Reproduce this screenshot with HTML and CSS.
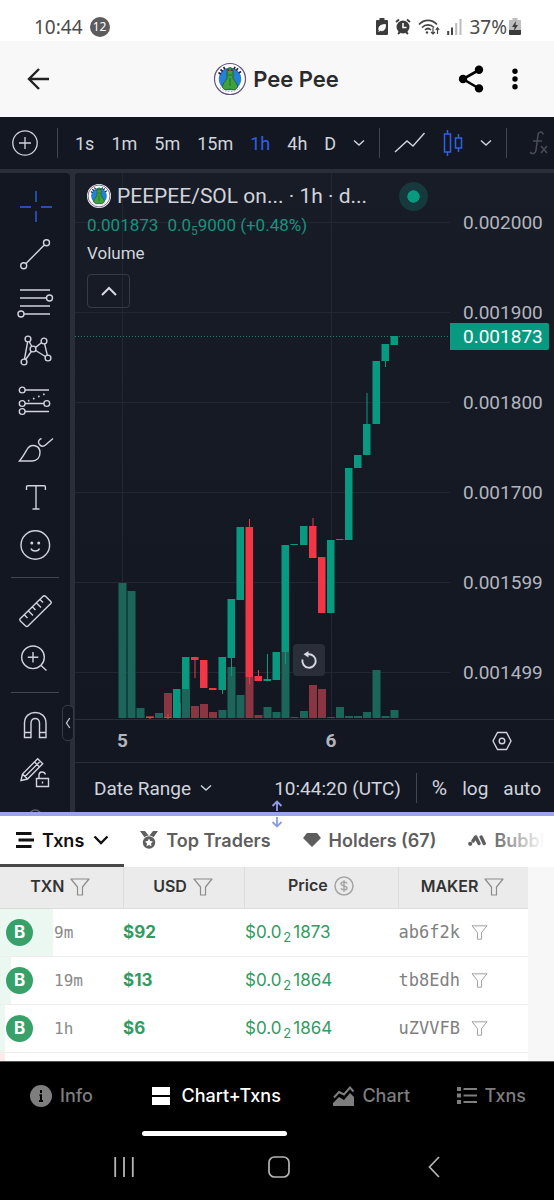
FILE: index.html
```html
<!DOCTYPE html>
<html lang="en">
<head>
<meta charset="utf-8">
<meta name="viewport" content="width=device-width, initial-scale=1">
<title>Pee Pee</title>
<link rel="stylesheet" href="styles.css">
</head>
<body>
<svg class="defs" aria-hidden="true">
  <symbol id="logo" viewBox="0 0 34 34">
    <circle cx="17" cy="17" r="15.500" fill="#fff" stroke="#63517f" stroke-width="1.200"/>
    <circle cx="17" cy="17" r="11.200" fill="#2580d8"/>
    <path d="M5.500 10.500l2.500 1.800M7.500 7.500l2.300 2M10.500 5l1.500 2.200M22 4.800l-1 2.500M25 6.300l-1.800 2.200M28 9.500l-2.400 1.600" stroke="#26233a" stroke-width="1.700"/>
    <path d="M7 25.500c5 5.500 15 5.500 20 0" fill="none" stroke="#b5a6c4" stroke-width="1" stroke-dasharray="1.500 1.500"/>
    <path d="M14 9c0-4.500 6-4.500 6 0v7.500c1.500 2.500 5.500 6 4.300 9-1.100 2.700-5.300 3-7.300 1.300-2 1.700-6.200 1.400-7.300-1.300-1.200-3 2.800-6.500 4.300-9z" fill="#3fa03c" stroke="#1f5c2b" stroke-width=".9"/>
    <path d="M14.500 8h2M17.700 8h2" stroke="#7a2f35" stroke-width="2"/>
    <path d="M15 13h4M17 16v8" stroke="#246a2d" stroke-width="1"/>
  </symbol>
  <symbol id="funnel" viewBox="0 0 20 18">
    <path d="M1 1h18l-6.500 8v8h-5V9z" fill="none" stroke="currentColor" stroke-width="1.200" stroke-linejoin="round"/>
  </symbol>
  <symbol id="chev" viewBox="0 0 12 8">
    <path d="M1 1.500l5 4.500 5-4.500" fill="none" stroke="currentColor" stroke-width="1.400"/>
  </symbol>
</svg>

<header class="status">
  <span class="clock">10:44</span>
  <span class="count">12</span>
  <span class="status-icons">
    <svg width="12" height="17" viewBox="0 0 12 17"><path d="M3.500 0h5v2H11q1 0 1 1v13q0 1-1 1H1q-1 0-1-1V3q0-1 1-1h2.500z" fill="#3c3c3c"/><path d="M3 12.500c-1-4 1.500-6 6.500-6 .3 4.500-1.500 7-5 6zM2.500 14l3.500-4" fill="#fff" stroke="#fff" stroke-width=".8"/></svg>
    <svg width="16" height="17" viewBox="0 0 16 17"><circle cx="8" cy="9" r="6.500" fill="#3c3c3c"/><path d="M1 4l3-2.500M15 4l-3-2.500M3 16l2-2M13 16l-2-2" stroke="#3c3c3c" stroke-width="1.800"/><path d="M8 5v4.500h3.500" fill="none" stroke="#fff" stroke-width="1.500"/></svg>
    <svg width="22" height="18" viewBox="0 0 22 18"><path d="M1 6.500c5-5.500 13-5.500 18 0M4 9.500c3.500-3.500 8.500-3.500 12 0M7 12c2-2 4-2 6 0" fill="none" stroke="#444" stroke-width="1.700"/><circle cx="9" cy="14.500" r="1.200" fill="#444"/><path d="M15 10v6M13 14l2 2 2-2M19.500 16v-6M17.800 11.800l1.700-2 1.700 2" fill="none" stroke="#444" stroke-width="1.200"/></svg>
    <svg width="15" height="16" viewBox="0 0 15 16"><path d="M1.200 16v-4M5 16V8.500" stroke="#444" stroke-width="2"/><path d="M9.200 16V4M13.500 16V0" stroke="#bbb" stroke-width="2"/></svg>
  </span>
  <span class="level">37%</span>
  <svg width="12" height="17" viewBox="0 0 12 17"><path d="M3.500 0h5v2H11q1 0 1 1v9H0V3q0-1 1-1h2.500z" fill="#bdbdbd"/><path d="M0 12h12v4q0 1-1 1H1q-1 0-1-1z" fill="#3c3c3c"/><path d="M7 3L3 9h2.500L5 13l4-6H6.500z" fill="#3c3c3c"/></svg>
</header>

<div class="appbar">
  <button class="plain" aria-label="Back"><svg width="24" height="24" viewBox="0 0 24 24"><path d="M13 2L3 12l10 10M3 12h20" fill="none" stroke="#222" stroke-width="2.400"/></svg></button>
  <h1 class="title"><svg class="title-logo"><use href="#logo"/></svg>Pee Pee</h1>
  <button class="plain" aria-label="Share"><svg width="26" height="28" viewBox="0 0 26 28"><path d="M21 5L5 14l16 9.500" fill="none" stroke="#000" stroke-width="2.600"/><circle cx="21" cy="4.800" r="4.200"/><circle cx="5" cy="14" r="4.200"/><circle cx="21" cy="23.400" r="4.200"/></svg></button>
  <button class="plain more" aria-label="More"><svg width="6" height="22" viewBox="0 0 6 22"><circle cx="3" cy="3.200" r="2.700"/><circle cx="3" cy="11" r="2.700"/><circle cx="3" cy="18.800" r="2.700"/></svg></button>
</div>

<main>
<section class="tv">
  <div class="tv-top">
    <button class="plain" aria-label="Add symbol"><svg width="26" height="26" viewBox="0 0 26 26"><g fill="none" stroke="currentColor" stroke-width="1.300"><circle cx="13" cy="13" r="12.200"/><path d="M13 7v12M7 13h12"/></g></svg></button>
    <span class="vline first"></span>
    <button class="plain">1s</button>
    <button class="plain">1m</button>
    <button class="plain">5m</button>
    <button class="plain">15m</button>
    <button class="plain active">1h</button>
    <button class="plain">4h</button>
    <button class="plain">D</button>
    <button class="plain" aria-label="More intervals"><svg class="chev"><use href="#chev"/></svg></button>
    <span class="vline tight"></span>
    <button class="plain" aria-label="Line chart"><svg width="32" height="22" viewBox="0 0 32 22"><path d="M1 20l12-11 6 5L30.500 1" fill="none" stroke="currentColor" stroke-width="1.400"/></svg></button>
    <button class="plain active" aria-label="Candles"><svg width="20" height="28" viewBox="0 0 20 28"><path d="M1.500 5h6v18h-6zM4.500 1v4M4.500 23v4M12.500 9h6v10h-6zM15.500 5v4M15.500 19v4" fill="none" stroke="currentColor" stroke-width="1.500"/></svg></button>
    <button class="plain" aria-label="Chart types"><svg class="chev"><use href="#chev"/></svg></button>
    <span class="vline tight"></span>
    <button class="plain faded" aria-label="Indicators"><svg width="20" height="26" viewBox="0 0 20 26"><path d="M14.500 4.500C13 1 9.500 1.500 9 5L7 20c-.5 4-4 4.500-6 2M4 11h9M12 16l6 7M18 16l-6 7" fill="none" stroke="currentColor" stroke-width="1.500"/></svg></button>
  </div>

  <div class="tv-body">
    <div class="tools">
      <button class="tool active" aria-label="Cross"><svg viewBox="0 0 37 36"><path d="M3 18h11M24 18h11M19 2v11M19 22v11"/></svg></button>
      <button class="tool" aria-label="Trend line"><svg viewBox="0 0 37 36"><circle cx="6.700" cy="28.700" r="3"/><circle cx="29.500" cy="5.700" r="3"/><path d="M9 26.500L27.300 8"/></svg></button>
      <button class="tool" aria-label="Fibonacci"><svg viewBox="0 0 37 36"><path d="M3 5h30M3 13h26M3 21h30M7 29h26"/><circle cx="32.500" cy="13" r="3"/><circle cx="4" cy="29" r="3"/></svg></button>
      <button class="tool" aria-label="Patterns"><svg viewBox="0 0 37 36"><path d="M7.500 26L10.600 9M12.300 8.700l2.500 4.800M18.500 14.400l6-4.600M27.600 10.900l2.700 11.200M28.300 23.500L18.700 17.500M14.300 18.500L8.700 26.500"/><circle cx="11" cy="6" r="2.900"/><circle cx="27" cy="8" r="2.900"/><circle cx="16" cy="16" r="2.900"/><circle cx="7" cy="29" r="2.900"/><circle cx="31" cy="25" r="2.900"/></svg></button>
      <button class="tool" aria-label="Projection"><svg viewBox="0 0 37 36"><circle cx="5.200" cy="9" r="2.900"/><circle cx="5.200" cy="22.500" r="2.900"/><circle cx="29.800" cy="22.500" r="2.900"/><circle cx="5.200" cy="30.500" r="2.900"/><path d="M8 9h24M8 22.500h19M8 30.500h24"/><path d="M11 20l19-8" stroke-dasharray="1.500 4" stroke-width="1.800"/></svg></button>
      <button class="tool" aria-label="Brush"><svg viewBox="0 0 37 36"><path d="M2.500 32C6 28 8 24 10 20.500c4-7 13-4 13 3 0 5-3 8.500-8 8.500zM24.500 9.500c-3 1-4 4-2 6 1.500 2 4 2.500 6 .5L36 9.500"/></svg></button>
      <button class="tool" aria-label="Text"><svg viewBox="0 0 37 36"><path d="M9.500 13v-3q0-1.200 1.200-1.200h16.500q1.200 0 1.200 1.200v3M19 9v23M15.500 32h7"/></svg></button>
      <button class="tool" aria-label="Icons"><svg viewBox="0 0 37 36"><circle cx="18.300" cy="20" r="14.300"/><path d="M14 23.500c1 3.300 7.500 3.300 8.500 0"/><circle class="dot" cx="14.800" cy="18" r="1.500"/><circle class="dot" cx="21.700" cy="18" r="1.500"/></svg></button>
      <hr>
      <button class="tool" aria-label="Measure"><svg viewBox="0 0 37 36"><path d="M25.800 4.500q1.500-1.500 3 0l5 5q1 1 0 2L11 34q-1.200 1.200-2.400 0l-5.200-5q-1.200-1.200 0-2.400zM7.500 23l3 3M11.500 19l4.500 4.500M15.500 15l3 3M19.500 11l4.500 4.500M23 7.500l3 3"/></svg></button>
      <button class="tool" aria-label="Zoom in"><svg viewBox="0 0 37 36"><circle cx="16" cy="17.300" r="11.300"/><path d="M16 12v10.500M10.800 17.300h10.500M24 25.500l5.500 5"/></svg></button>
      <hr>
      <button class="tool" aria-label="Magnet"><svg viewBox="0 0 37 36"><path d="M7.500 30.500V16c0-14 21.500-14 21.500 0v14.500h-6.500V16c0-6-8.500-6-8.500 0v14.500zM7.500 25.500H14M22.500 25.500H29"/></svg></button>
      <button class="tool" aria-label="Lock drawings"><svg viewBox="0 0 37 36"><path d="M4 25.500l1.500-6.500L20.700 3.700l5 5L10.500 24zM17.500 7l5 5M5.500 19l5 5M8 21.500L22.500 7M19.500 23.500h12v8h-12zM22 23v-3c0-4 5.500-4 6.500-.5M25.500 26.500v2"/></svg></button>
      <button class="tool dim" aria-label="Hide drawings"><svg viewBox="0 0 37 36"><circle cx="18.300" cy="13" r="6"/></svg></button>
    </div>

    <div class="pane">
      <div class="plot-row">
        <div class="plot">
          <svg class="candles" viewBox="0 0 375 546" preserveAspectRatio="none" id="chart" role="img" aria-label="Hourly price and volume">
            <path d="M0 49.500h375M0 139.500h375M0 229.500h375M0 319.500h375M0 409.500h375M0 499.500h375M47.500 0v546M256.500 0v546" stroke="#232733"/>
            <path d="M0 163.500h375" stroke="#19806f" stroke-dasharray="1 2"/>
          </svg>
          <div class="legend">
            <div class="pair"><svg class="pair-logo"><use href="#logo"/></svg><span>PEEPEE/SOL on... · 1h · d...</span><i class="live"></i></div>
            <div class="quote"><span>0.001873</span><span>0.0<sub>5</sub>9000 (+0.48%)</span></div>
            <div class="volume">Volume</div>
            <button class="fold" aria-label="Collapse legend"><svg width="16" height="10" viewBox="0 0 16 10"><path d="M1 9l7-7 7 7" fill="none" stroke="#d8dae2" stroke-width="2"/></svg></button>
          </div>
          <button class="reset" aria-label="Reset chart"><svg width="18" height="18" viewBox="0 0 18 18"><path d="M2.500 8.500a6.700 6.700 0 1 0 6-5.200H6" fill="none" stroke="#d8dae2" stroke-width="1.900"/><path d="M8.500 0v6.600L3.500 3.300z" fill="#d8dae2"/></svg></button>
        </div>
        <div class="prices">
          <span>0.002000</span><span>0.001900</span><span>0.001800</span><span>0.001700</span><span>0.001599</span><span>0.001499</span>
          <b class="tag">0.001873</b>
        </div>
      </div>
      <div class="time-row">
        <div class="times"><span>5</span><span></span><span>6</span></div>
        <button class="plain gear" aria-label="Chart settings"><svg width="20" height="20" viewBox="0 0 20 20"><path d="M5.500 1.500h9l4.500 8.500-4.500 8.500h-9L1 10z" fill="none" stroke="currentColor" stroke-width="1.400"/><circle cx="10" cy="10" r="2.800" fill="none" stroke="currentColor" stroke-width="1.400"/></svg></button>
      </div>
      <div class="tv-foot">
        <button class="plain range">Date Range <svg class="chev"><use href="#chev"/></svg></button>
        <button class="plain utc">10:44:20 (UTC)</button>
        <span class="vline"></span>
        <button class="plain percent">%</button>
        <button class="plain">log</button>
        <button class="plain">auto</button>
      </div>
    </div>
    <button class="handle" aria-label="Hide toolbar"><svg width="6" height="12" viewBox="0 0 6 12"><path d="M4.800 1L1.500 6l3.300 5" fill="none" stroke="#c5c8d1" stroke-width="1.300"/></svg></button>
  </div>
</section>

<div class="splitter"><svg class="grip" width="12" height="28" viewBox="0 0 12 28"><path d="M6 11V1.500M1.500 6L6 1.500 10.500 6M6 17v9.500M1.500 22L6 26.500l4.500-4.500" fill="none" stroke="#8e9be9" stroke-width="1.800"/></svg></div>

<nav class="tabs">
  <button class="tab current"><svg width="18" height="16" viewBox="0 0 18 16"><path d="M0 1.600h15.500M2.500 8H18M0 14.400h15.500" stroke="currentColor" stroke-width="3"/></svg>Txns<svg class="tab-chev" width="16" height="10" viewBox="0 0 16 10"><path d="M1.500 1.500L8 8l6.500-6.500" fill="none" stroke="currentColor" stroke-width="2.400"/></svg></button>
  <button class="tab"><svg width="18" height="18" viewBox="0 0 18 18"><path d="M0 0h5l4 5 4-5h5l-5 7H5z" fill="currentColor"/><circle cx="9" cy="11.500" r="7" fill="#fff"/><circle cx="9" cy="11.500" r="6.200" fill="currentColor"/><path d="M9 7.500l1.200 2.500 2.800.4-2 2 .5 2.800L9 13.900l-2.500 1.300.5-2.800-2-2 2.800-.4z" fill="#fff"/></svg>Top Traders</button>
  <button class="tab"><svg width="18" height="14" viewBox="0 0 18 14"><path d="M4 0h10l4 5-9 9-9-9z" fill="currentColor"/></svg>Holders (67)</button>
  <button class="tab"><svg width="18" height="11" viewBox="0 0 18 11"><path d="M7.600 2L5 6M7.800 2l3.200 6.500M13.200 2l3 6.500" stroke="currentColor" stroke-width="3.400" stroke-linecap="round"/><circle cx="2.200" cy="8.800" r="2.100" fill="currentColor"/></svg>Bubbl</button>
</nav>

<div class="txns">
  <table>
    <colgroup><col class="c1"><col class="c2"><col class="c3"><col class="c4"></colgroup>
    <thead><tr>
      <th>TXN<svg class="funnel"><use href="#funnel"/></svg></th>
      <th>USD<svg class="funnel"><use href="#funnel"/></svg></th>
      <th>Price<svg class="coin" viewBox="0 0 20 20"><circle cx="10" cy="10" r="9" fill="none" stroke="currentColor" stroke-width="1.500"/><path d="M13 7.500c-.8-2-6-2-6 .3 0 2.600 6 1.600 6 4.300 0 2.400-5.300 2.400-6 .2M10 4.200v11.600" fill="none" stroke="currentColor" stroke-width="1.500"/></svg></th>
      <th>MAKER<svg class="funnel"><use href="#funnel"/></svg></th>
    </tr></thead>
    <tbody>
      <tr><td class="when fill-l"><b class="buy">B</b>9m</td><td class="usd">$92</td><td class="price">$0.0<sub>2</sub>1873</td><td class="maker">ab6f2k<svg class="funnel small"><use href="#funnel"/></svg></td></tr>
      <tr><td class="when fill-m"><b class="buy">B</b>19m</td><td class="usd">$13</td><td class="price">$0.0<sub>2</sub>1864</td><td class="maker">tb8Edh<svg class="funnel small"><use href="#funnel"/></svg></td></tr>
      <tr><td class="when fill-s"><b class="buy">B</b>1h</td><td class="usd">$6</td><td class="price">$0.0<sub>2</sub>1864</td><td class="maker">uZVVFB<svg class="funnel small"><use href="#funnel"/></svg></td></tr>
      <tr><td class="when fill-sell"></td><td></td><td></td><td></td></tr>
    </tbody>
  </table>
</div>
</main>

<footer class="bottom">
  <nav class="views">
    <a href="#info"><svg width="22" height="22" viewBox="0 0 22 22"><circle cx="11" cy="11" r="11" fill="currentColor"/><path d="M11 5v3M11 9.500v7M9.500 10.300H12M9 16h4" stroke="#000" stroke-width="2"/></svg>Info</a>
    <a href="#both" class="on"><svg width="18" height="18" viewBox="0 0 18 18"><path d="M0 0h18v8H0zM0 10h18v8H0z" fill="currentColor"/></svg>Chart+Txns</a>
    <a href="#chart"><svg width="21" height="20" viewBox="0 0 21 20"><path d="M0 20v-3l6-6 5 3 6-7 4 4v9z" fill="currentColor"/><path d="M1 12l5-5.500 5 2.500 6-7 3.500 4" fill="none" stroke="#000" stroke-width="4.500"/><path d="M1 11.500L6 6l5 2.500 6-7 3.500 4" fill="none" stroke="currentColor" stroke-width="2"/></svg>Chart</a>
    <a href="#txns"><svg width="20" height="17" viewBox="0 0 20 17"><path d="M0 2h4M0 8.500h4M0 15h4" stroke="currentColor" stroke-width="4"/><path d="M6.500 2H20M6.500 8.500H20M6.500 15H20" stroke="currentColor" stroke-width="2"/></svg>Txns</a>
  </nav>
  <div class="sysnav">
    <button class="plain" aria-label="Recents"><svg width="20" height="22" viewBox="0 0 20 22"><path d="M1.200 1v20M10 1v20M18.800 1v20" stroke="#b5b5b5" stroke-width="1.800"/></svg></button>
    <button class="plain" aria-label="Home"><svg width="22" height="22" viewBox="0 0 22 22"><rect x="1" y="1" width="20" height="20" rx="5.500" fill="none" stroke="#b5b5b5" stroke-width="1.700"/></svg></button>
    <button class="plain" aria-label="Back"><svg width="12" height="22" viewBox="0 0 12 22"><path d="M11 1L1.500 11 11 21" fill="none" stroke="#b5b5b5" stroke-width="1.700"/></svg></button>
  </div>
</footer>
<script src="chart.js"></script>
</body>
</html>
```
FILE: chart.js
```js
// One entry per hour: [volume top, rising?, body top, body bottom, wick top, wick bottom]
const bars = [
  [410, 1], [418, 1], [535, 1], [543, 0, 544, 545, 544, 546], [540, 1],
  [520, 0, 544, 545, 541, 546], [530, 1, 516, 545], [516, 1, 484, 516],
  [533, 0, 484, 487, 484, 505], [531, 0, 487, 515], [539, 0, 515, 517],
  [537, 1, 484, 517, 484, 521], [494, 1, 426, 485, 426, 503],
  [522, 1, 354, 427], [504, 0, 354, 504, 346, 511],
  [542, 0, 503, 508, 497, 508], [534, 1, 506, 508, 481, 508],
  [539, 1, 479, 507], [479, 1, 372, 479, 372, 491],
  [544, 1, 371, 372], [538, 1, 353, 372], [512, 0, 353, 385, 345, 385],
  [516, 0, 384, 440], [544, 1, 367, 440], [534, 1, 366, 367],
  [543, 1, 295, 367], [543, 1, 282, 295], [539, 1, 251, 282, 220, 282],
  [497, 1, 188, 251], [543, 1, 171, 188, 171, 194], [537, 1, 163, 172]
];
const svg = document.getElementById("chart");
function rect(x, y, width, height, fill) {
  const r = document.createElementNS("http://www.w3.org/2000/svg", "rect");
  Object.entries({ x, y, width, height, fill }).forEach(([k, v]) => r.setAttribute(k, v));
  svg.appendChild(r);
}
bars.forEach(([vol, up, top, bottom, high, low], i) => {
  const mid = Math.round((47.6 + i * 9.06) * 2) / 2;
  rect(mid - 4, vol, 8, 545 - vol, up ? "#1c655b" : "#8a3642");
  if (top === undefined) return;
  const color = up ? "#089981" : "#f23645";
  rect(mid - 4, top, 7.5, bottom - top, color);
  if (high !== undefined) {
    rect(mid - 0.5, high, 1, top - high, color);
    rect(mid - 0.5, bottom, 1, low - bottom, color);
  }
});
```
FILE: styles.css
```css
* { box-sizing: border-box; }
body {
  margin: 0;
  background: #f7f7f7;
  font-family: Roboto, "Noto Sans", sans-serif;
}
svg { display: block; flex: none; }
.defs { position: absolute; width: 0; height: 0; }
button { font: inherit; color: inherit; cursor: pointer; }
.plain {
  display: flex;
  align-items: center;
  justify-content: center;
  padding: 0;
  border: 0;
  background: none;
  white-space: nowrap;
}

.status {
  display: flex;
  align-items: center;
  height: 41px;
  padding: 12px 33px 0 34px;
  background: #fff;
  color: #4b4b4b;
  font: 19px "Noto Sans", sans-serif;
}
.count {
  width: 20px;
  margin-left: 7px;
  border-radius: 10px;
  background: #5c5c5c;
  color: #fff;
  font-size: 12px;
  line-height: 20px;
  text-align: center;
}
.status-icons {
  display: flex;
  align-items: center;
  gap: 7px;
  margin-left: auto;
}
.level { margin: 0 2px 0 7px; }

.appbar {
  display: flex;
  align-items: center;
  height: 76px;
  padding: 0 36px 0 26px;
  background: #f8f8f8;
}
.title {
  display: flex;
  flex: 1;
  align-items: center;
  justify-content: center;
  gap: 6px;
  margin: 0;
  padding-left: 44px;
  color: #2b2b2b;
  font: 600 22px Inter, sans-serif;
}
.title-logo { width: 34px; height: 34px; }
.more { margin-left: 28px; }

.tv { background: #2a2e39; color: #d1d4dc; font-size: 19px; }
.tv-top {
  display: flex;
  align-items: center;
  gap: 17px;
  height: 52px;
  padding-left: 12px;
  overflow: hidden;
  background: #131722;
  font-size: 18px;
}
.vline { flex: none; width: 1px; height: 30px; background: #434651; }
.vline.first { margin: 0 0 0 2px; }
.vline.tight { margin: 0 -3px; }
.chev { width: 12px; height: 8px; }
.active { color: #2f60e8; }
.faded { margin-left: 8px; color: #4a4d58; }

.tv-body {
  position: relative;
  display: flex;
  gap: 5px;
  height: 643px;
  padding-top: 4px;
}
.tools {
  width: 70px;
  padding-top: 10px;
  overflow: hidden;
  border-radius: 0 4px 0 0;
  background: #131722;
}
.tool {
  display: flex;
  align-items: center;
  justify-content: center;
  width: 100%;
  height: 48px;
  padding: 0;
  border: 0;
  background: none;
}
.tool svg {
  width: 37px;
  height: 36px;
  fill: none;
  stroke: currentColor;
  stroke-width: 1.4;
}
.tool .dot { fill: currentColor; stroke: none; }
.tool.dim { color: #5d606b; }
.tools hr { height: 1px; margin: 10px 11px 8px; border: 0; background: #434651; }
.handle {
  position: absolute;
  top: 536px;
  left: 62px;
  display: flex;
  align-items: center;
  justify-content: center;
  width: 12px;
  height: 36px;
  padding: 0;
  border: 1px solid #363a45;
  border-radius: 5px;
  background: #131722;
}

.pane {
  flex: 1;
  min-width: 0;
  overflow: hidden;
  border-radius: 4px 0 0 0;
  background: #131722;
}
.plot-row { display: flex; background: linear-gradient(#181c27, #131722); }
.plot { position: relative; flex: 1; min-width: 0; }
.candles { width: 100%; height: 546px; }
.prices {
  position: relative;
  display: flex;
  flex-direction: column;
  width: 104px;
  height: 546px;
  padding: 5px 0 0 13px;
  color: #b2b5be;
  line-height: 90px;
}
.tag {
  position: absolute;
  top: 150px;
  left: 0;
  width: 99px;
  padding-left: 13px;
  border-radius: 0 2px 2px 0;
  background: #089981;
  color: #fff;
  font-weight: 400;
  line-height: 27px;
}
.legend { position: absolute; top: 8px; left: 12px; }
.pair {
  display: flex;
  align-items: center;
  gap: 6px;
  height: 30px;
  font-size: 21px;
  white-space: nowrap;
}
.pair-logo { width: 24px; height: 24px; border-radius: 12px; background: #fff; }
.live {
  width: 29px;
  height: 29px;
  margin-left: 26px;
  border: 8px solid #15393c;
  border-radius: 15px;
  background: #089981;
  background-clip: padding-box;
}
.quote {
  display: flex;
  gap: 9px;
  color: #14947f;
  font-size: 17px;
  line-height: 28px;
}
.quote sub { font-size: 12px; line-height: 0; }
.volume { font-size: 17px; line-height: 28px; }
.fold {
  display: flex;
  align-items: center;
  justify-content: center;
  width: 43px;
  height: 34px;
  margin-top: 7px;
  padding: 0;
  border: 1px solid #363a45;
  border-radius: 4px;
  background: none;
}
.reset {
  position: absolute;
  bottom: 43px;
  left: 58%;
  display: flex;
  align-items: center;
  justify-content: center;
  width: 32px;
  height: 32px;
  padding: 0;
  border: 0;
  border-radius: 4px;
  background: #2a2e39;
}
.time-row {
  display: flex;
  height: 44px;
  border: solid #2a2e39;
  border-width: 1px 0;
}
.times {
  display: grid;
  flex: 1;
  grid-template-columns: 95fr 42fr 238fr;
  color: #b2b5be;
  font-weight: 700;
  line-height: 42px;
  text-align: center;
}
.gear { width: 104px; }
.tv-foot {
  display: flex;
  align-items: center;
  gap: 15px;
  height: 50px;
  padding: 0 13px 0 19px;
}
.range { gap: 9px; }
.utc { margin-left: auto; }
.percent { font-size: 21px; }

.splitter { position: relative; z-index: 1; height: 4px; background: #9ca5ec; }
.grip { position: absolute; top: -12px; left: 50%; margin-left: -6px; }

.tabs {
  position: relative;
  display: flex;
  height: 51px;
  overflow: hidden;
  background: #fff;
}
.tabs::after {
  content: "";
  position: absolute;
  inset: 0 0 0 auto;
  width: 64px;
  background: linear-gradient(90deg, #fff0, #fff 85%);
}
.tab {
  display: flex;
  flex: none;
  align-items: center;
  gap: 8px;
  padding: 0 16px;
  border: 0;
  border-bottom: 3px solid transparent;
  background: none;
  color: #5e5e5e;
  font: 600 18px Inter, sans-serif;
}
.tab.current { padding-right: 15px; border-color: #484848; color: #111; }
.tab-chev { margin-left: 1px; }

.txns { height: 194px; overflow: hidden; }
table {
  width: calc(100% - 26px);
  border-collapse: collapse;
  table-layout: fixed;
  background: #fff;
}
.c1 { width: 23.300%; }
.c2 { width: 23.100%; }
.c3 { width: 29.100%; }
th {
  height: 41px;
  padding: 0 2px 3px 0;
  border: solid #dcdcdc;
  border-width: 0 0 1px 1px;
  background: #ebebeb;
  color: #333;
  font: 600 16px Inter, sans-serif;
}
th:first-child { border-left: 0; }
.funnel, .coin {
  display: inline-block;
  width: 20px;
  height: 18px;
  margin-left: 6px;
  color: #8c8c8c;
  vertical-align: -4px;
}
.coin { height: 20px; color: #a5a5a5; vertical-align: -5px; }
td {
  height: 48px;
  padding: 0;
  border-bottom: 1px solid #eee;
  font-family: Inter, sans-serif;
}
.when {
  color: #8a8a8a;
  font: 16px "DejaVu Sans Mono", monospace;
  background: linear-gradient(#ebf7f1, #ebf7f1) no-repeat 0 0 / 0 100%;
}
.fill-l { background-size: 53px 100%; }
.fill-m { background-size: 11px 100%; }
.fill-s { background-size: 5px 100%; }
.fill-sell { background: linear-gradient(#fdeaea, #fdeaea) no-repeat 0 0 / 5px 100%; }
.buy {
  display: inline-block;
  width: 27px;
  margin: 0 21px 0 6px;
  border-radius: 14px;
  background: #38a169;
  color: #fff;
  font: 700 17px/27px Inter, sans-serif;
  text-align: center;
}
.usd { color: #339a60; font-size: 17px; font-weight: 700; }
.price { color: #339a60; font-size: 17px; }
.price sub { margin: 0 2px; font-size: 13px; line-height: 0; }
.maker { color: #808080; font: 17px "DejaVu Sans Mono", monospace; }
.funnel.small { width: 17px; height: 15px; margin-left: 11px; color: #a0a0a0; vertical-align: -2px; }

.bottom { border-top: 1px solid #555; background: #000; }
.views {
  display: flex;
  justify-content: space-between;
  height: 75px;
  padding: 0 28px 0 30px;
}
.views a {
  display: flex;
  align-items: center;
  gap: 8px;
  padding-bottom: 8px;
  color: #7e7e7e;
  font: 500 18px Inter, sans-serif;
  text-decoration: none;
}
.views .on {
  position: relative;
  gap: 12px;
  margin-left: 2px;
  padding: 0 6px 8px 10px;
  color: #fff;
}
.views .on::after {
  content: "";
  position: absolute;
  right: 0;
  bottom: 1px;
  left: 0;
  height: 5px;
  border-radius: 3px;
  background: #fff;
}
.sysnav {
  display: grid;
  grid-template-columns: repeat(3, 1fr);
  height: 63px;
  padding: 0 42px 3px 46px;
}
```
